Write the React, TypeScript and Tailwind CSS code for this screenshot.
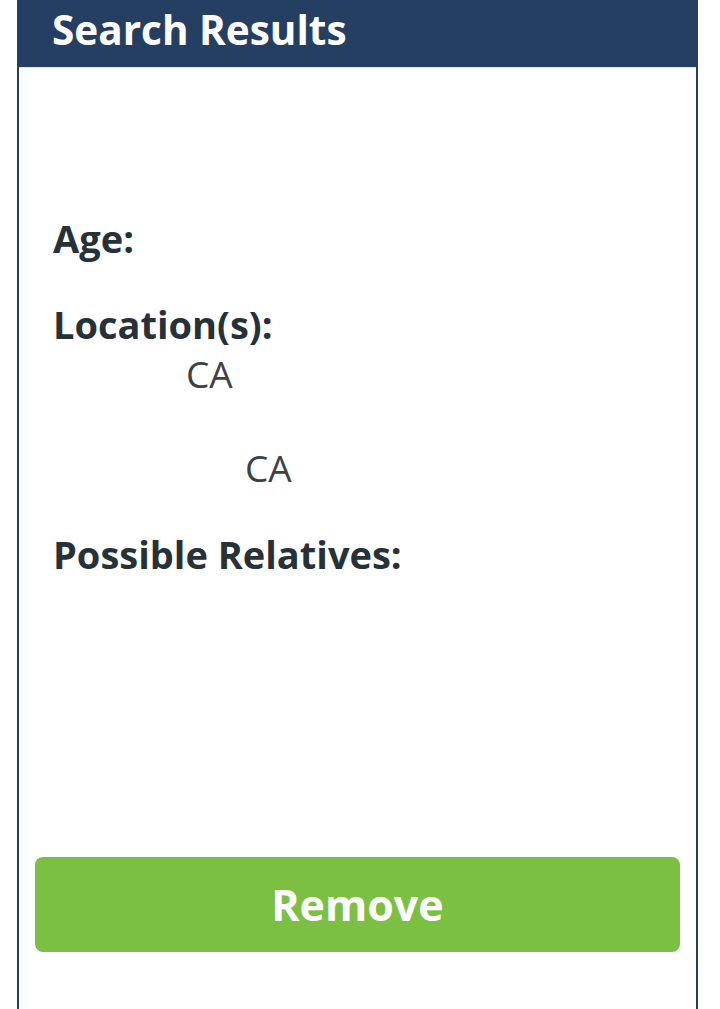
export default function App() {
  return (
    <div
      className="h-[1009px] w-[720px] overflow-hidden bg-white"
      style={{ fontFamily: '"Open Sans", "Noto Sans", sans-serif' }}
    >
      <div className="ml-[17px] flex h-full w-[681px] flex-col border-x-2 border-[#243f62]">
        {/* Header */}
        <div className="h-[68px] shrink-0 border-b border-[#dbe5f0] bg-[#243f62] pl-[33px] pt-[10px]">
          <h1 className="text-[40.5px] font-bold leading-none text-white">Search Results</h1>
        </div>

        {/* Details */}
        <div className="flex flex-col pl-[34px] pt-[151px]">
          <p className="text-[38px] font-bold leading-none text-[#263238]">Age:</p>
          <p className="mt-[48px] text-[38px] font-bold leading-none text-[#263238]">
            Location(s):
          </p>
          <p className="ml-[133px] mt-[12px] text-[37px] leading-none text-[#3b4246]">CA</p>
          <p className="ml-[192px] mt-[57px] text-[37px] leading-none text-[#3b4246]">CA</p>
          <p className="mt-[49px] text-[38px] font-bold leading-none text-[#263238]">
            Possible Relatives:
          </p>
        </div>

        <button className="mx-[16px] mt-[284px] flex h-[95px] shrink-0 items-center justify-center rounded-[8px] bg-[#7cc043]">
          <span className="text-[43px] font-bold leading-none text-white">Remove</span>
        </button>
      </div>
    </div>
  )
}
